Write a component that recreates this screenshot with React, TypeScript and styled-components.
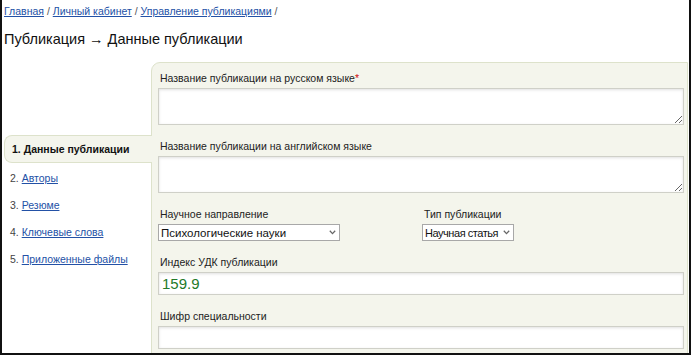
import React from 'react';
import styled, { createGlobalStyle } from 'styled-components';

const linkBlue = '#2351a6';
const panelBg = '#f4f5ec';
const panelBorder = '#dde2cb';
const textMain = '#222';

const GlobalStyle = createGlobalStyle`
  html, body {
    margin: 0;
    padding: 0;
    background: #fff;
  }
  body {
    font-family: 'Liberation Sans', Arial, sans-serif;
    color: ${textMain};
  }
`;

const Frame = styled.div`
  width: 691px;
  height: 355px;
  box-sizing: border-box;
  border: 2px solid #111;
  border-top: none;
  overflow: hidden;
  background: #fff;
`;

const Crumbs = styled.div`
  padding: 4px 0 0 2px;
  font-size: 10.5px;
  line-height: 14px;
  color: #555;
  a {
    color: ${linkBlue};
    text-decoration: underline;
  }
`;

const Title = styled.h1`
  margin: 11px 0 0 2px;
  font-size: 14.5px;
  line-height: 20px;
  font-weight: normal;
  color: #111;
`;

const Body = styled.div`
  display: flex;
  margin-top: 13px;
  padding-right: 1px;
`;

const Nav = styled.ul`
  list-style: none;
  margin: 0;
  padding: 73px 0 0 2px;
  width: 147px;
  flex-shrink: 0;
  font-size: 10.5px;
`;

interface NavItemProps {
  active?: boolean;
}

const NavItem = styled.li<NavItemProps>`
  position: relative;
  z-index: 1;
  height: ${(p) => (p.active ? '26px' : '27px')};
  line-height: ${(p) => (p.active ? '26px' : '14px')};
  padding-left: ${(p) => (p.active ? '7px' : '6px')};
  margin-right: ${(p) => (p.active ? '-1px' : '0')};
  margin-bottom: ${(p) => (p.active ? '8px' : '0')};
  font-weight: ${(p) => (p.active ? 'bold' : 'normal')};
  color: ${(p) => (p.active ? '#111' : '#444')};
  background: ${(p) => (p.active ? panelBg : 'transparent')};
  border: ${(p) => (p.active ? `1px solid ${panelBorder}` : 'none')};
  border-right: none;
  border-radius: 8px 0 0 8px;
  a {
    color: ${linkBlue};
    text-decoration: underline;
  }
`;

const Panel = styled.div`
  flex: 1;
  height: 300px;
  box-sizing: border-box;
  background: ${panelBg};
  border: 1px solid ${panelBorder};
  border-radius: 9px 0 0 0;
  padding: 8px 3px 0 6px;
`;

const Field = styled.div`
  margin-bottom: 14px;
`;

const Label = styled.label`
  display: block;
  font-size: 10.5px;
  line-height: 14px;
  padding-left: 2px;
  margin-bottom: 3px;
  color: #222;
`;

const Star = styled.span`
  color: #d01010;
`;

const Area = styled.textarea`
  display: block;
  width: 100%;
  height: 37px;
  box-sizing: border-box;
  border: 1px solid #cfd0c8;
  box-shadow: inset 0 1px 3px rgba(0, 0, 0, 0.12);
  background: #fff;
  margin: 0;
`;

const TextInput = styled.input`
  display: block;
  width: 100%;
  height: 23px;
  box-sizing: border-box;
  border: 1px solid #cfd0c8;
  box-shadow: inset 0 1px 3px rgba(0, 0, 0, 0.12);
  background: #fff;
  margin: 0;
  padding: 0 3px;
  font-family: 'Liberation Sans', Arial, sans-serif;
  font-size: 15px;
  color: #237a2a;
`;

const Row = styled.div`
  display: grid;
  grid-template-columns: 264px auto;
  margin-bottom: 14px;
`;

const SelectBox = styled.div<{ w: number }>`
  position: relative;
  width: ${(p) => p.w}px;
  height: 17px;
  svg {
    position: absolute;
    right: 4px;
    top: 6px;
    pointer-events: none;
  }
`;

const Select = styled.select<{ tight?: boolean }>`
  display: block;
  width: 100%;
  height: 17px;
  box-sizing: border-box;
  appearance: none;
  border: 1px solid #a8a8a8;
  background: #fff;
  font-family: 'Liberation Sans', Arial, sans-serif;
  font-size: ${(p) => (p.tight ? '11px' : '11.5px')};
  letter-spacing: ${(p) => (p.tight ? '-0.45px' : '0')};
  color: #111;
  padding: 0 12px 0 2px;
  margin: 0;
  border-radius: 0;
  outline: none;
`;

const Chevron = () => (
  <svg width="7" height="5" viewBox="0 0 7 5">
    <path d="M0.8 0.8 L3.5 3.6 L6.2 0.8" fill="none" stroke="#666" strokeWidth="1.3" />
  </svg>
);

export default function App() {
  return (
    <Frame>
      <GlobalStyle />
      <Crumbs>
        <a href="#">Главная</a> / <a href="#">Личный кабинет</a> /{' '}
        <a href="#">Управление публикациями</a> /
      </Crumbs>
      <Title>Публикация → Данные публикации</Title>
      <Body>
        <Nav>
          <NavItem active>1. Данные публикации</NavItem>
          <NavItem>
            2. <a href="#">Авторы</a>
          </NavItem>
          <NavItem>
            3. <a href="#">Резюме</a>
          </NavItem>
          <NavItem>
            4. <a href="#">Ключевые слова</a>
          </NavItem>
          <NavItem>
            5. <a href="#">Приложенные файлы</a>
          </NavItem>
        </Nav>
        <Panel>
          <Field>
            <Label>
              Название публикации на русском языке<Star>*</Star>
            </Label>
            <Area />
          </Field>
          <Field>
            <Label>Название публикации на английском языке</Label>
            <Area />
          </Field>
          <Row>
            <div>
              <Label>Научное направление</Label>
              <SelectBox w={182}>
                <Select defaultValue="psy">
                  <option value="psy">Психологические науки</option>
                </Select>
                <Chevron />
              </SelectBox>
            </div>
            <div>
              <Label>Тип публикации</Label>
              <SelectBox w={92}>
                <Select tight defaultValue="art">
                  <option value="art">Научная статья</option>
                </Select>
                <Chevron />
              </SelectBox>
            </div>
          </Row>
          <Field>
            <Label>Индекс УДК публикации</Label>
            <TextInput defaultValue="159.9" />
          </Field>
          <Field>
            <Label>Шифр специальности</Label>
            <TextInput />
          </Field>
        </Panel>
      </Body>
    </Frame>
  );
}
